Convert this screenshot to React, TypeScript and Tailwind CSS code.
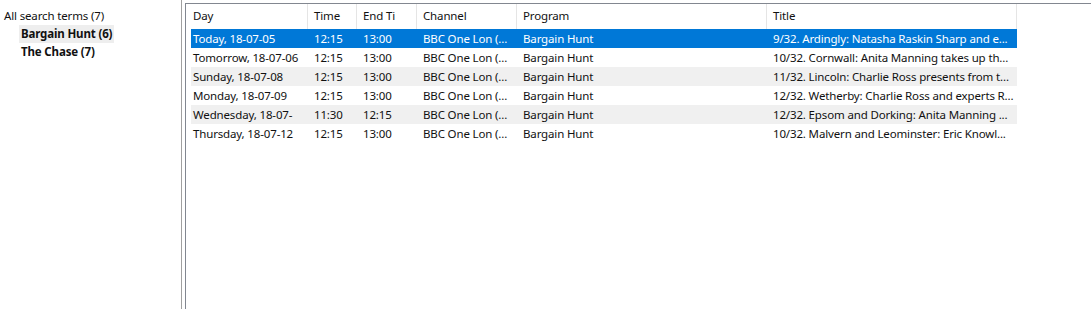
import React from "react";

const rows = [
  ["Today, 18-07-05", "12:15", "13:00", "BBC One Lon (...", "Bargain Hunt", "9/32. Ardingly: Natasha Raskin Sharp and e..."],
  ["Tomorrow, 18-07-06", "12:15", "13:00", "BBC One Lon (...", "Bargain Hunt", "10/32. Cornwall: Anita Manning takes up th..."],
  ["Sunday, 18-07-08", "12:15", "13:00", "BBC One Lon (...", "Bargain Hunt", "11/32. Lincoln: Charlie Ross presents from t..."],
  ["Monday, 18-07-09", "12:15", "13:00", "BBC One Lon (...", "Bargain Hunt", "12/32. Wetherby: Charlie Ross and experts R..."],
  ["Wednesday, 18-07-", "11:30", "12:15", "BBC One Lon (...", "Bargain Hunt", "12/32. Epsom and Dorking: Anita Manning ..."],
  ["Thursday, 18-07-12", "12:15", "13:00", "BBC One Lon (...", "Bargain Hunt", "10/32. Malvern and Leominster: Eric Knowl..."],
];

const headers = [
  { label: "Day", cls: "w-[122px] pl-[7px]" },
  { label: "Time", cls: "w-[49px] pl-[6px]" },
  { label: "End Ti", cls: "w-[60px] pl-[6px]" },
  { label: "Channel", cls: "w-[100px] pl-[6px]" },
  { label: "Program", cls: "w-[250px] pl-[6px]" },
  { label: "Title", cls: "w-[250px] pl-[6px]" },
];

const cellCls = [
  "w-[117px] pl-[2px]",
  "w-[49px] pl-[6px]",
  "w-[60px] pl-[6px]",
  "w-[100px] pl-[6px]",
  "w-[250px] pl-[6px]",
  "w-[250px] pl-[6px]",
];

export default function App() {
  return (
    <div className="flex w-[1091px] h-[309px] bg-white overflow-hidden text-[11.5px] tracking-[-0.15px] text-[#111] font-['Noto_Sans',sans-serif]">
      <div className="w-[182px] shrink-0 border-r border-[#a0a0a0] pt-[7px]">
        <div className="h-[18px] leading-[18px] pl-[4px] whitespace-nowrap">All search terms (7)</div>
        <div className="h-[18px] pl-[19px] flex">
          <span className="leading-[18px] px-[2px] bg-[#eeeeee] font-bold whitespace-nowrap">Bargain Hunt (6)</span>
        </div>
        <div className="h-[18px] pl-[19px] flex">
          <span className="leading-[18px] px-[2px] font-bold whitespace-nowrap">The Chase (7)</span>
        </div>
      </div>
      <div className="w-[3px] shrink-0" />
      <div className="flex-1 mt-[3px] border-l border-t border-[#828790] flex flex-col">
        <div className="flex h-[25px]">
          {headers.map((h) => (
            <div
              key={h.label}
              className={`${h.cls} shrink-0 border-r border-[#e5e5e5] leading-[24px] whitespace-nowrap overflow-hidden`}
            >
              {h.label}
            </div>
          ))}
        </div>
        <div className="flex flex-col pl-[5px]">
          {rows.map((r, i) => {
            const bg = i === 0 ? "bg-[#0078d7] text-white" : i % 2 === 0 ? "bg-[#f0f0f0]" : "bg-white";
            return (
              <div key={i} className={`flex h-[19px] w-[826px] ${bg}`}>
                {r.map((c, j) => (
                  <div
                    key={j}
                    className={`${cellCls[j]} shrink-0 leading-[19px] whitespace-nowrap overflow-hidden`}
                  >
                    {c}
                  </div>
                ))}
              </div>
            );
          })}
        </div>
      </div>
    </div>
  );
}
